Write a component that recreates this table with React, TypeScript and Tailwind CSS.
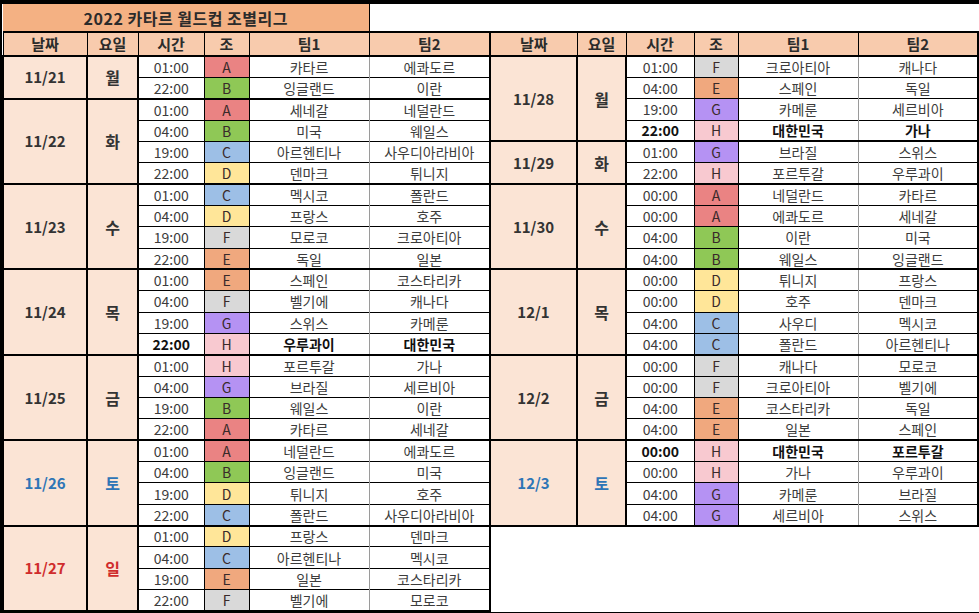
import React from "react";

type Match = [string, string, string, string, boolean?];

interface Day {
  date: string;
  day: string;
  tone?: "blue" | "red";
  matches: Match[];
}

const LEFT: Day[] = [
  {
    date: "11/21",
    day: "월",
    matches: [
      ["01:00", "A", "카타르", "에콰도르"],
      ["22:00", "B", "잉글랜드", "이란"],
    ],
  },
  {
    date: "11/22",
    day: "화",
    matches: [
      ["01:00", "A", "세네갈", "네덜란드"],
      ["04:00", "B", "미국", "웨일스"],
      ["19:00", "C", "아르헨티나", "사우디아라비아"],
      ["22:00", "D", "덴마크", "튀니지"],
    ],
  },
  {
    date: "11/23",
    day: "수",
    matches: [
      ["01:00", "C", "멕시코", "폴란드"],
      ["04:00", "D", "프랑스", "호주"],
      ["19:00", "F", "모로코", "크로아티아"],
      ["22:00", "E", "독일", "일본"],
    ],
  },
  {
    date: "11/24",
    day: "목",
    matches: [
      ["01:00", "E", "스페인", "코스타리카"],
      ["04:00", "F", "벨기에", "캐나다"],
      ["19:00", "G", "스위스", "카메룬"],
      ["22:00", "H", "우루과이", "대한민국", true],
    ],
  },
  {
    date: "11/25",
    day: "금",
    matches: [
      ["01:00", "H", "포르투갈", "가나"],
      ["04:00", "G", "브라질", "세르비아"],
      ["19:00", "B", "웨일스", "이란"],
      ["22:00", "A", "카타르", "세네갈"],
    ],
  },
  {
    date: "11/26",
    day: "토",
    tone: "blue",
    matches: [
      ["01:00", "A", "네덜란드", "에콰도르"],
      ["04:00", "B", "잉글랜드", "미국"],
      ["19:00", "D", "튀니지", "호주"],
      ["22:00", "C", "폴란드", "사우디아라비아"],
    ],
  },
  {
    date: "11/27",
    day: "일",
    tone: "red",
    matches: [
      ["01:00", "D", "프랑스", "덴마크"],
      ["04:00", "C", "아르헨티나", "멕시코"],
      ["19:00", "E", "일본", "코스타리카"],
      ["22:00", "F", "벨기에", "모로코"],
    ],
  },
];

const RIGHT: Day[] = [
  {
    date: "11/28",
    day: "월",
    matches: [
      ["01:00", "F", "크로아티아", "캐나다"],
      ["04:00", "E", "스페인", "독일"],
      ["19:00", "G", "카메룬", "세르비아"],
      ["22:00", "H", "대한민국", "가나", true],
    ],
  },
  {
    date: "11/29",
    day: "화",
    matches: [
      ["01:00", "G", "브라질", "스위스"],
      ["22:00", "H", "포르투갈", "우루과이"],
    ],
  },
  {
    date: "11/30",
    day: "수",
    matches: [
      ["00:00", "A", "네덜란드", "카타르"],
      ["00:00", "A", "에콰도르", "세네갈"],
      ["04:00", "B", "이란", "미국"],
      ["04:00", "B", "웨일스", "잉글랜드"],
    ],
  },
  {
    date: "12/1",
    day: "목",
    matches: [
      ["00:00", "D", "튀니지", "프랑스"],
      ["00:00", "D", "호주", "덴마크"],
      ["04:00", "C", "사우디", "멕시코"],
      ["04:00", "C", "폴란드", "아르헨티나"],
    ],
  },
  {
    date: "12/2",
    day: "금",
    matches: [
      ["00:00", "F", "캐나다", "모로코"],
      ["00:00", "F", "크로아티아", "벨기에"],
      ["04:00", "E", "코스타리카", "독일"],
      ["04:00", "E", "일본", "스페인"],
    ],
  },
  {
    date: "12/3",
    day: "토",
    tone: "blue",
    matches: [
      ["00:00", "H", "대한민국", "포르투갈", true],
      ["00:00", "H", "가나", "우루과이"],
      ["04:00", "G", "카메룬", "브라질"],
      ["04:00", "G", "세르비아", "스위스"],
    ],
  },
];

const GROUP_BG: Record<string, string> = {
  A: "bg-[#ea8383]",
  B: "bg-[#8fc856]",
  C: "bg-[#9dbfe6]",
  D: "bg-[#ffe699]",
  E: "bg-[#f0a87e]",
  F: "bg-[#d9d9d9]",
  G: "bg-[#b592f3]",
  H: "bg-[#f8c9d0]",
};

const TONE: Record<string, string> = {
  blue: "text-[#2e75b6]",
  red: "text-[#d02c2c]",
};

interface Row {
  day: Day;
  match: Match;
  first: boolean;
  last: boolean;
}

function flatten(days: Day[]): Row[] {
  const rows: Row[] = [];
  days.forEach((day) => {
    day.matches.forEach((match, i) => {
      rows.push({ day, match, first: i === 0, last: i === day.matches.length - 1 });
    });
  });
  return rows;
}

function half(row: Row, side: "l" | "r") {
  const { day, match, first, last } = row;
  const [time, group, team1, team2, bold] = match;
  const tb = `${first ? "border-t-2" : "border-t"} ${last ? "border-b-2" : "border-b-0"}`;
  const weight = bold ? "font-bold text-[#111]" : "text-[#3c3c3c]";
  const cells: React.ReactNode[] = [];

  if (first) {
    const tone = day.tone ? TONE[day.tone] : "text-[#333]";
    cells.push(
      <td
        key={side + "date"}
        rowSpan={day.matches.length}
        className={`border-2 border-black bg-[#fbe4d5] text-center align-middle text-[15px] font-bold ${tone}`}
      >
        {day.date}
      </td>,
      <td
        key={side + "day"}
        rowSpan={day.matches.length}
        className={`border-y-2 border-r-2 border-black bg-[#fbe4d5] text-center align-middle text-[16px] font-bold ${tone}`}
      >
        {day.day}
      </td>
    );
  }

  cells.push(
    <td key={side + "t"} className={`${tb} border-r border-black bg-white text-center ${weight}`}>
      {time}
    </td>,
    <td key={side + "g"} className={`${tb} border-r border-black text-center text-[14px] text-[#3a2a2a] ${GROUP_BG[group]}`}>
      {group}
    </td>,
    <td key={side + "1"} className={`${tb} border-r border-black border-r-[#9a9a9a] bg-white text-center ${weight}`}>
      {team1}
    </td>,
    <td key={side + "2"} className={`${tb} border-r-2 border-black bg-white text-center ${weight}`}>
      {team2}
    </td>
  );
  return cells;
}

const HEADS = ["날짜", "요일", "시간", "조", "팀1", "팀2"];

export default function App() {
  const left = flatten(LEFT);
  const right = flatten(RIGHT);

  return (
    <div
      className="h-[613px] w-[979px] bg-black px-[2px] pb-[2px] pt-[4px]"
      style={{ fontFamily: '"Noto Sans CJK KR", "Noto Sans", sans-serif' }}
    >
      <table className="h-[607px] w-[975px] table-fixed border-collapse bg-white text-[14px] leading-[18px]">
        <colgroup>
          <col className="w-[84px]" />
          <col className="w-[51px]" />
          <col className="w-[66px]" />
          <col className="w-[45px]" />
          <col className="w-[120px]" />
          <col className="w-[121px]" />
          <col className="w-[87px]" />
          <col className="w-[49px]" />
          <col className="w-[68px]" />
          <col className="w-[44px]" />
          <col className="w-[120px]" />
          <col className="w-[120px]" />
        </colgroup>
        <tbody>
          <tr className="h-[28px]">
            <td
              colSpan={5}
              className="border-r border-b-2 border-black bg-[#f4b183] text-center text-[16px] font-bold tracking-[0.5px] text-[#2b2b2b]"
            >
              2022 카타르 월드컵 조별리그
            </td>
            <td colSpan={7} className="border-b-2 border-black bg-white" />
          </tr>
          <tr className="h-[24px]">
            {[...HEADS, ...HEADS].map((h, i) => (
              <td
                key={i}
                className={`border-x border-black bg-[#f8cbad] text-center text-[15px] font-bold text-[#2b2b2b] ${
                  i === 5 || i === 11 ? "border-r-2" : ""
                }`}
              >
                {h}
              </td>
            ))}
          </tr>
          {left.map((row, i) => (
            <tr key={i} className="h-[21.35px]">
              {half(row, "l")}
              {i < right.length && half(right[i], "r")}
              {i === right.length && (
                <td colSpan={6} rowSpan={left.length - right.length} className="bg-white" />
              )}
            </tr>
          ))}
        </tbody>
      </table>
    </div>
  );
}
